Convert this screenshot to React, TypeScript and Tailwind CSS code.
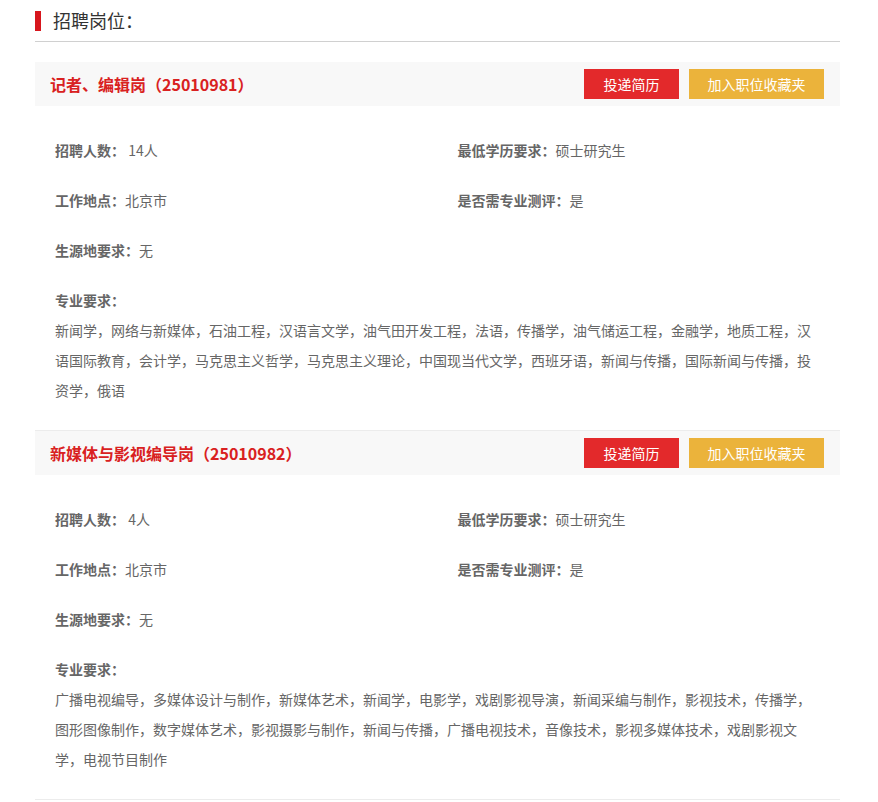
import React from 'react';

interface Job {
  title: string;
  count: string;
  education: string;
  location: string;
  needTest: string;
  origin: string;
  majors: string;
}

const jobs: Job[] = [
  {
    title: '记者、编辑岗（25010981）',
    count: ' 14人',
    education: '硕士研究生',
    location: '北京市',
    needTest: '是',
    origin: '无',
    majors:
      '新闻学，网络与新媒体，石油工程，汉语言文学，油气田开发工程，法语，传播学，油气储运工程，金融学，地质工程，汉语国际教育，会计学，马克思主义哲学，马克思主义理论，中国现当代文学，西班牙语，新闻与传播，国际新闻与传播，投资学，俄语',
  },
  {
    title: '新媒体与影视编导岗（25010982）',
    count: ' 4人',
    education: '硕士研究生',
    location: '北京市',
    needTest: '是',
    origin: '无',
    majors:
      '广播电视编导，多媒体设计与制作，新媒体艺术，新闻学，电影学，戏剧影视导演，新闻采编与制作，影视技术，传播学，图形图像制作，数字媒体艺术，影视摄影与制作，新闻与传播，广播电视技术，音像技术，影视多媒体技术，戏剧影视文学，电视节目制作',
  },
];

function Field({ label, value }: { label: string; value: string }) {
  return (
    <div className="h-[50px] pl-5 flex items-center text-[14px] text-[#666]">
      <span className="font-bold">{label}：</span>
      <span className="whitespace-pre">{value}</span>
    </div>
  );
}

function JobCard({ job }: { job: Job }) {
  return (
    <div className="border-b border-[#ececec]">
      {/* Header */}
      <div className="h-[44px] bg-[#f8f8f8] flex items-center justify-between pl-[15px] pr-4">
        <h3 className="text-[16px] font-bold text-[#d92121]">{job.title}</h3>
        <div className="flex gap-[10px]">
          <button className="w-[95px] h-[30px] bg-[#e3292b] text-white text-[14px]">投递简历</button>
          <button className="w-[135px] h-[30px] bg-[#ebb33b] text-white text-[14px]">加入职位收藏夹</button>
        </div>
      </div>

      {/* Info */}
      <div className="pt-[19px]">
        <div className="grid grid-cols-2">
          <Field label="招聘人数" value={job.count} />
          <Field label="最低学历要求" value={job.education} />
          <Field label="工作地点" value={job.location} />
          <Field label="是否需专业测评" value={job.needTest} />
          <Field label="生源地要求" value={job.origin} />
        </div>
        <div className="px-5 pt-[10px] pb-[25px] text-[14px] text-[#666] leading-[30px]">
          <div className="font-bold">专业要求：</div>
          <p>{job.majors}</p>
        </div>
      </div>
    </div>
  );
}

export default function App() {
  return (
    <div
      className="min-h-[802px] bg-white pl-[35px] pr-[38px]"
      style={{ fontFamily: '"Noto Sans CJK SC", "Noto Sans", sans-serif' }}
    >
      <div className="h-[42px] flex items-center border-b border-[#d0d0d0]">
        <span className="w-[6px] h-[20px] bg-[#d7161d]" />
        <span className="ml-3 text-[18px] text-[#333]">招聘岗位：</span>
      </div>
      <div className="mt-5">
        {jobs.map((job) => (
          <JobCard key={job.title} job={job} />
        ))}
      </div>
    </div>
  );
}
